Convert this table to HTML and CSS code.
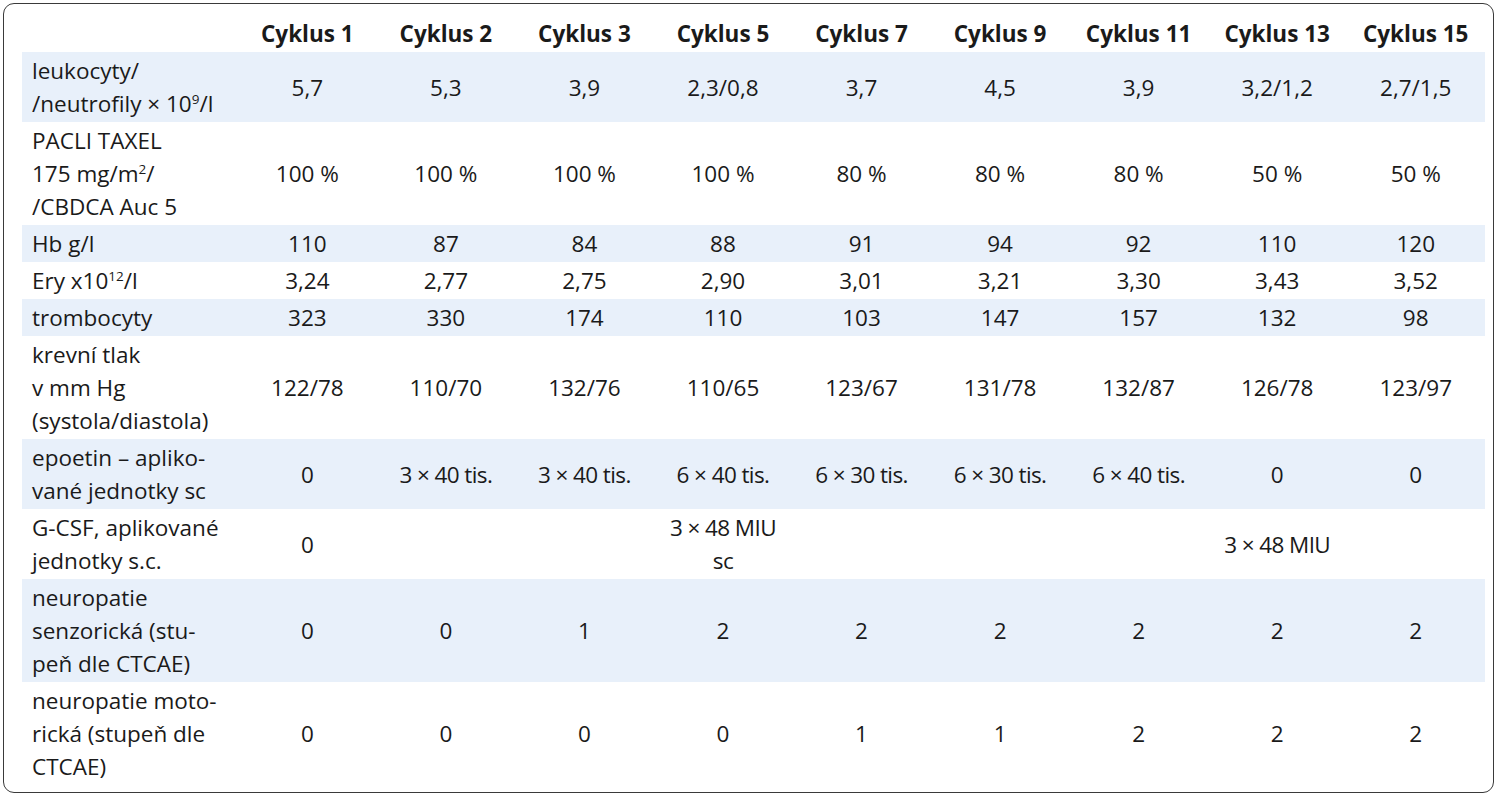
FILE: index.html
```html
<!DOCTYPE html>
<html lang="cs">
<head>
<meta charset="utf-8">
<title>Tabulka</title>
<link rel="stylesheet" href="styles.css">
</head>
<body>
<div class="box">
<table class="tbl">
<thead>
<tr>
<th class="lbl"></th>
<th>Cyklus 1</th><th>Cyklus 2</th><th>Cyklus 3</th><th>Cyklus 5</th><th>Cyklus 7</th><th>Cyklus 9</th><th>Cyklus 11</th><th>Cyklus 13</th><th>Cyklus 15</th>
</tr>
</thead>
<tbody>
<tr class="sh">
<td class="lbl">leukocyty/<br>/neutrofily × 10<sup>9</sup>/l</td>
<td>5,7</td><td>5,3</td><td>3,9</td><td>2,3/0,8</td><td>3,7</td><td>4,5</td><td>3,9</td><td>3,2/1,2</td><td>2,7/1,5</td>
</tr>
<tr>
<td class="lbl">PACLI TAXEL<br>175 mg/m<sup>2</sup>/<br>/CBDCA Auc 5</td>
<td>100 %</td><td>100 %</td><td>100 %</td><td>100 %</td><td>80 %</td><td>80 %</td><td>80 %</td><td>50 %</td><td>50 %</td>
</tr>
<tr class="sh">
<td class="lbl">Hb g/l</td>
<td>110</td><td>87</td><td>84</td><td>88</td><td>91</td><td>94</td><td>92</td><td>110</td><td>120</td>
</tr>
<tr>
<td class="lbl">Ery x10<sup>12</sup>/l</td>
<td>3,24</td><td>2,77</td><td>2,75</td><td>2,90</td><td>3,01</td><td>3,21</td><td>3,30</td><td>3,43</td><td>3,52</td>
</tr>
<tr class="sh">
<td class="lbl">trombocyty</td>
<td>323</td><td>330</td><td>174</td><td>110</td><td>103</td><td>147</td><td>157</td><td>132</td><td>98</td>
</tr>
<tr>
<td class="lbl">krevní tlak<br>v mm Hg<br>(systola/diastola)</td>
<td>122/78</td><td>110/70</td><td>132/76</td><td>110/65</td><td>123/67</td><td>131/78</td><td>132/87</td><td>126/78</td><td>123/97</td>
</tr>
<tr class="sh">
<td class="lbl">epoetin – apliko-<br>vané jednotky sc</td>
<td>0</td><td class="cond">3 × 40 tis.</td><td class="cond">3 × 40 tis.</td><td class="cond">6 × 40 tis.</td><td class="cond">6 × 30 tis.</td><td class="cond">6 × 30 tis.</td><td class="cond">6 × 40 tis.</td><td>0</td><td>0</td>
</tr>
<tr>
<td class="lbl">G-CSF, aplikované<br>jednotky s.c.</td>
<td>0</td><td></td><td></td><td class="cond">3 × 48 MIU<br>sc</td><td></td><td></td><td></td><td class="cond">3 × 48 MIU</td><td></td>
</tr>
<tr class="sh">
<td class="lbl">neuropatie<br>senzorická (stu-<br>peň dle CTCAE)</td>
<td>0</td><td>0</td><td>1</td><td>2</td><td>2</td><td>2</td><td>2</td><td>2</td><td>2</td>
</tr>
<tr>
<td class="lbl">neuropatie moto-<br>rická (stupeň dle<br>CTCAE)</td>
<td>0</td><td>0</td><td>0</td><td>0</td><td>1</td><td>1</td><td>2</td><td>2</td><td>2</td>
</tr>
</tbody>
</table>
</div>
</body>
</html>
```

FILE: styles.css
```css
html, body {
  margin: 0;
  padding: 0;
  background: #ffffff;
}
body {
  padding: 3px;
  font-family: "Open Sans", "Noto Sans", sans-serif;
  color: #1a1a1a;
}
.box {
  width: 1491px;
  height: 790px;
  border: 1px solid #3a3a3a;
  border-radius: 11px;
  box-sizing: border-box;
  padding: 11px 8px 0 18px;
}
.tbl {
  border-collapse: collapse;
  table-layout: fixed;
  width: 1463px;
  font-size: 22.5px;
}
.tbl th, .tbl td {
  width: 138.5px;
  padding: 2px 0;
  line-height: 33px;
  text-align: center;
  vertical-align: middle;
  white-space: nowrap;
}
.tbl th.lbl, .tbl td.lbl {
  width: 216px;
  text-align: left;
  padding-left: 10px;
  box-sizing: border-box;
}
.tbl th {
  font-weight: 700;
  font-size: 22.5px;
}
.tbl tr.sh td {
  background: #e8f0fa;
}
.tbl sup {
  font-size: 0.6em;
  line-height: 0;
  vertical-align: 0.6em;
}
.cond {
  letter-spacing: -0.6px;
}
```
